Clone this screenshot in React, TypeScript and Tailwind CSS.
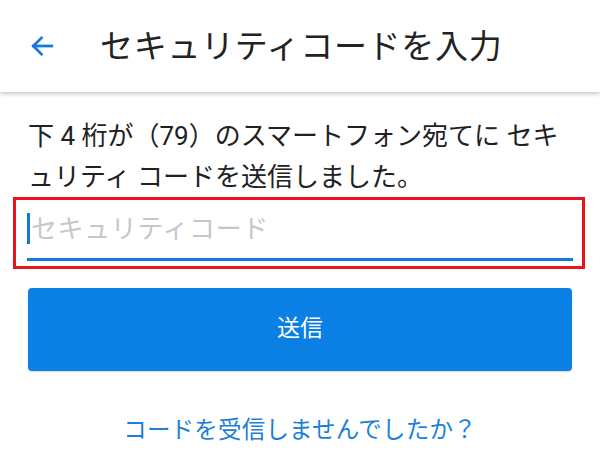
export default function App() {
  const font = { fontFamily: '"Roboto", "Noto Sans CJK JP", sans-serif' };
  return (
    <div className="w-[600px] h-[462px] bg-white overflow-hidden" style={font}>
      {/* Header */}
      <header className="h-[92px] flex items-center shadow-[0_2px_4px_rgba(0,0,0,0.22)] relative z-10">
        <button className="ml-[28px] w-[28px] h-[28px] flex items-center justify-center">
          <svg width="26" height="26" viewBox="0 0 24 24" fill="none" stroke="#1a78e0" strokeWidth="2.6" strokeLinecap="square">
            <path d="M21 12H4" />
            <path d="M11.5 4.5 4 12l7.5 7.5" />
          </svg>
        </button>
        <h1 className="ml-[44px] text-[33px] leading-none text-[#222] tracking-[0.7px]">セキュリティコードを入力</h1>
      </header>

      {/* Body */}
      <div className="pt-[24px]">
        <p className="px-[28px] text-[26px] leading-[41px] text-[#212121]">
          下 4 桁が（79）のスマートフォン宛てに セキュリティ コードを送信しました。
        </p>

        <div className="pl-[13px] pr-[15px] -mt-px">
          <div className="border-[3px] border-[#e8141c] pl-[11px] pr-[9px] pb-[5px]">
            <div className="h-[61px] border-b-[3px] border-[#0f7be0] flex items-center">
              <span className="w-[3px] h-[31px] bg-[#1576e0] mr-[1px] -mt-[1px]" />
              <span className="text-[26px] leading-none text-[#c4c8cd] tracking-[0.6px]">セキュリティコード</span>
            </div>
          </div>
        </div>

        <div className="px-[28px] mt-[19px]">
          <button className="w-full h-[83px] rounded-[4px] bg-[#0a7fe4] text-white text-[23px] shadow-[0_1px_2px_rgba(0,0,0,0.15)]">
            送信
          </button>
        </div>

        <div className="mt-[46px] text-center">
          <a className="text-[23.5px] leading-[26px] text-[#1d80d8] tracking-[0.2px]">コードを受信しませんでしたか？</a>
        </div>
      </div>
    </div>
  );
}
